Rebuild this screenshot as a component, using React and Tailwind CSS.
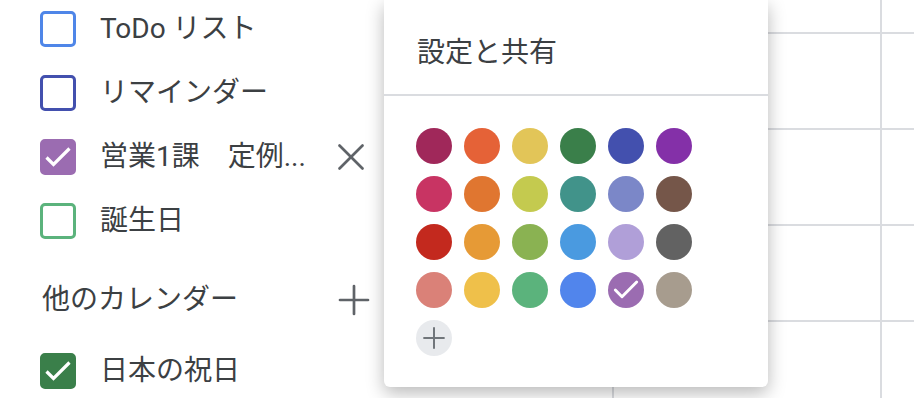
import { Check, X, Plus } from 'lucide-react';

const calendars = [
  { label: 'ToDo リスト', color: '#4f86e8', checked: false },
  { label: 'リマインダー', color: '#4350ae', checked: false },
  { label: '営業1課　定例...', color: '#9b6cb1', checked: true, removable: true },
  { label: '誕生日', color: '#5bb37c', checked: false },
];

const palette = [
  ['#a0285a', '#e56237', '#e2c558', '#3a7f4a', '#4350ae', '#8430a8'],
  ['#c83463', '#e07630', '#c4ca4f', '#41938a', '#7b87c8', '#755649'],
  ['#c3291e', '#e69a36', '#8ab252', '#4a9ae0', '#b09fd8', '#626262'],
  ['#da8178', '#efc04a', '#5bb37c', '#5185ec', '#9b6cb1', '#a79c8e'],
];

const CheckBox = ({ color, checked }) => (
  <div
    className="relative h-9 w-9 shrink-0 rounded-[5px] border-[3.5px]"
    style={{ borderColor: color, backgroundColor: checked ? color : 'transparent' }}
  >
    {checked && (
      <svg viewBox="0 0 36 36" className="absolute -left-[3.5px] -top-[3.5px] h-9 w-9">
        <polyline points="6.5,18.5 13.5,25.5 29.5,9.5" fill="none" stroke="white" strokeWidth="3.2" />
      </svg>
    )}
  </div>
);

const CalendarRow = ({ item }) => (
  <div className="flex h-16 items-center pl-10">
    <CheckBox color={item.color} checked={item.checked} />
    <span className="ml-6 w-[228px] whitespace-nowrap text-[28px] text-[#3c4043]">{item.label}</span>
    {item.removable && <X className="h-[46px] w-[46px] text-[#5f6368]" strokeWidth={1.4} />}
  </div>
);

const GridRow = ({ height }) => (
  <div className={`flex border-b-2 border-[#dadce0] ${height}`}>
    <div className="w-[230px] border-r-2 border-[#dadce0]" />
    <div className="w-[268px] border-r-2 border-[#dadce0]" />
    <div className="flex-1" />
  </div>
);

export default function App() {
  return (
    <div
      className="relative flex h-[398px] w-[914px] overflow-hidden bg-white"
      style={{ fontFamily: 'Roboto, "Noto Sans CJK JP", sans-serif' }}
    >
      <aside className="w-[384px] shrink-0">
        <div className="-mt-[3px]">
          {calendars.map((item) => (
            <CalendarRow key={item.label} item={item} />
          ))}
          <div className="flex h-[86px] items-center pl-[42px] pt-2">
            <span className="w-[288px] text-[28px] text-[#3c4043]">他のカレンダー</span>
            <Plus className="h-12 w-12 text-[#5f6368]" strokeWidth={1.35} />
          </div>
          <CalendarRow item={{ label: '日本の祝日', color: '#3a7f4a', checked: true }} />
        </div>
      </aside>

      <main className="flex flex-1 flex-col">
        <GridRow height="h-[34px]" />
        <GridRow height="h-[96px]" />
        <GridRow height="h-[96px]" />
        <GridRow height="h-[96px]" />
        <div className="flex flex-1">
          <div className="w-[230px] border-r-2 border-[#dadce0]" />
          <div className="w-[268px] border-r-2 border-[#dadce0]" />
        </div>
      </main>

      <div className="absolute left-[384px] top-0 flex h-[387px] w-[384px] flex-col rounded-b-md bg-white shadow-[0_6px_18px_rgba(0,0,0,0.28)]">
        <div className="flex h-[94px] items-center pl-[33px] pt-3 text-[28px] text-[#3c4043]">設定と共有</div>
        <div className="h-[2px] bg-[#dadce0]" />
        <div className="flex flex-col gap-3 pl-8 pt-8">
          {palette.map((row, i) => (
            <div key={i} className="flex gap-3">
              {row.map((c, j) => (
                <div
                  key={c + j}
                  className="flex h-9 w-9 items-center justify-center rounded-full"
                  style={{ backgroundColor: c }}
                >
                  {i === 3 && j === 4 && <Check className="h-8 w-8 text-white" strokeWidth={2.2} />}
                </div>
              ))}
            </div>
          ))}
          <div className="flex h-9 w-9 items-center justify-center rounded-full bg-[#e8eaed]">
            <Plus className="h-[34px] w-[34px] text-[#70757a]" strokeWidth={1.4} />
          </div>
        </div>
      </div>
    </div>
  );
}
